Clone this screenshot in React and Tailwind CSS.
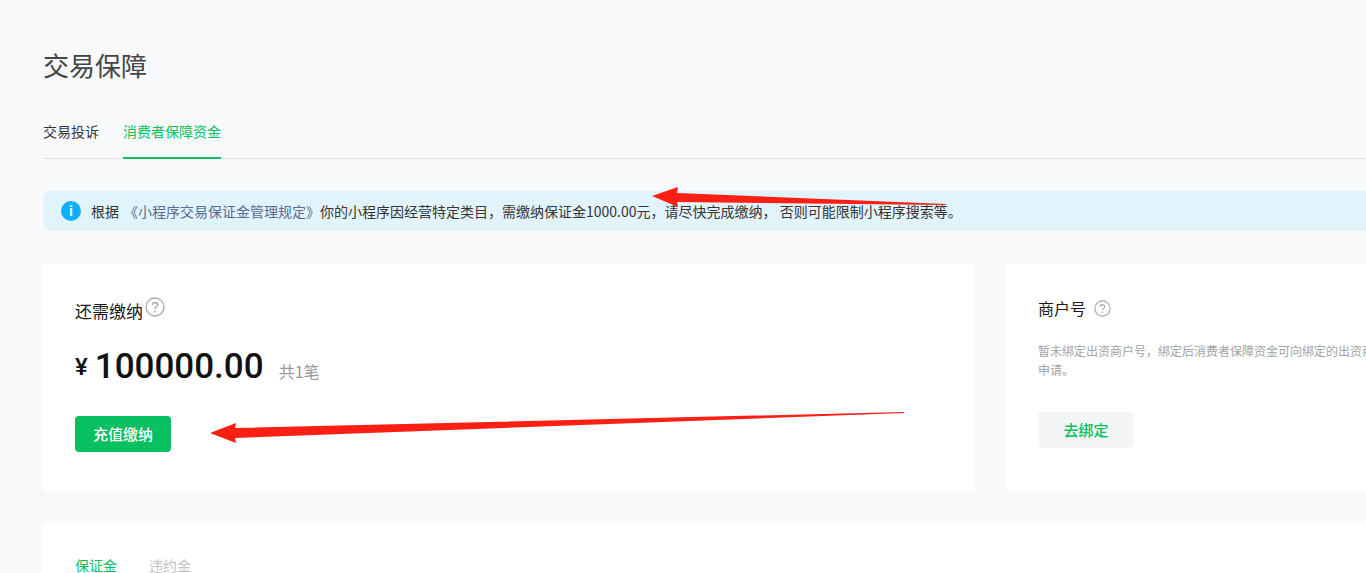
const font = { fontFamily: '"Noto Sans CJK SC", sans-serif' };

const HelpIcon = ({ size = 20 }) => (
  <svg width={size} height={size} viewBox="0 0 20 20" fill="none" className="shrink-0">
    <circle cx="10" cy="10" r="9" stroke="#a8a8a8" strokeWidth="1.3" />
    <path d="M7.4 8c0-1.5 1.1-2.5 2.6-2.5s2.6 1 2.6 2.3c0 1-.6 1.5-1.4 2.1-.8.5-1.2 1-1.2 1.9v.4" stroke="#a8a8a8" strokeWidth="1.3" />
    <circle cx="10" cy="14.4" r=".9" fill="#a8a8a8" />
  </svg>
);

const Arrows = () => (
  <svg width="1366" height="573" className="absolute left-0 top-0 pointer-events-none">
    <polygon points="652,196 678,187 677,193 946,204 946,205 677,202 678,207" fill="#fb1f14" />
    <polygon points="210,433 236,423 235,428 904,412 904,413 235,438 236,443" fill="#fb1f14" />
  </svg>
);

export default function App() {
  return (
    <div className="relative h-[573px] w-[1366px] overflow-hidden bg-[#f8f9fb] pl-[43px] pt-[47px] text-[#353535]" style={font}>
      <h1 className="h-[36px] text-[26px] font-normal leading-[36px] text-[#444]">交易保障</h1>

      <div className="mt-[24px] flex h-[52px] gap-6 border-b border-[#e0e1e3]">
        <div className="h-[52px] pt-[14px] text-sm leading-[20px] text-[#353535]">交易投诉</div>
        <div className="h-[52px] border-b-2 border-[#07c160] pt-[14px] text-sm leading-[20px] text-[#07c160]">消费者保障资金</div>
      </div>

      <div className="mt-[32px] flex h-[40px] w-[1400px] items-center rounded-l-lg bg-[#e1f3fb] pl-[18px] text-sm text-[#353535]">
        <span className="mr-[10px] flex h-5 w-5 items-center justify-center rounded-full bg-[#10aeff] text-[13px] font-bold text-white">i</span>
        <span>根据</span>
        <span className="ml-[5px] text-[#576b95]">《小程序交易保证金管理规定》</span>
        <span>你的小程序因经营特定类目，需缴纳保证金1000.00元，请尽快完成缴纳， 否则可能限制小程序搜索等。</span>
      </div>

      <div className="mt-[32px] flex gap-8">
        <div className="h-[228px] w-[931px] shrink-0 bg-white pl-[32px] pt-[35px]">
          <div className="flex items-start">
            <span className="mt-[1px] text-[17px] leading-[24px] text-[#1a1a1a]">还需缴纳</span>
            <span className="ml-[2px] -mt-[1px]"><HelpIcon /></span>
          </div>
          <div className="mt-[18px] flex h-[52px] items-center">
            <span className="mr-[7px] text-[24px] font-medium text-[#111]" style={{ fontFamily: 'Roboto, sans-serif' }}>¥</span>
            <span className="text-[35px] font-medium text-[#111]" style={{ fontFamily: 'Roboto, sans-serif' }}>100000.00</span>
            <span className="ml-[15px] mt-[8px] text-base text-[#999]">共1笔</span>
          </div>
          <button className="mt-[23px] h-[36px] w-[96px] rounded bg-[#07c160] text-[15px] font-medium text-white">充值缴纳</button>
        </div>

        <div className="h-[228px] w-[700px] shrink-0 bg-white pl-[32px] pt-[33px]">
          <div className="flex h-[24px] items-center">
            <span className="text-base text-[#1a1a1a]">商户号</span>
            <span className="ml-2"><HelpIcon size={17} /></span>
          </div>
          <p className="mt-[21px] whitespace-nowrap text-xs leading-[19px] text-[#a3a3a3]">
            暂未绑定出资商户号，绑定后消费者保障资金可向绑定的出资商户号发起
            <br />
            申请。
          </p>
          <button className="mt-[33px] h-[36px] w-[96px] rounded bg-[#f4f5f7] text-[15px] font-medium text-[#07c160]">去绑定</button>
        </div>
      </div>

      <div className="mt-[32px] flex h-[120px] w-[1400px] gap-8 bg-white pl-[32px] pt-[31px]">
        <span className="text-sm leading-[22px] text-[#07c160]">保证金</span>
        <span className="text-sm leading-[22px] text-[#c2c2c2]">违约金</span>
      </div>

      <Arrows />
    </div>
  );
}
